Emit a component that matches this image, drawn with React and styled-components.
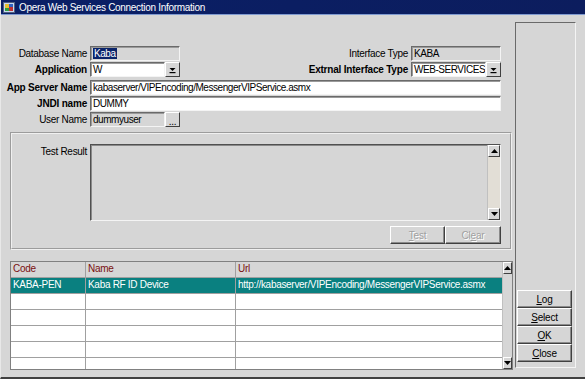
import styled, { createGlobalStyle } from "styled-components";

const GlobalStyle = createGlobalStyle`
  body {
    margin: 0;
    font-family: "Liberation Sans", Arial, sans-serif;
    font-size: 10px;
    letter-spacing: -0.3px;
  }
`;

const rows = [
  { code: "KABA-PEN", name: "Kaba RF ID Device", url: "http://kabaserver/VIPEncoding/MessengerVIPService.asmx" },
  { code: "", name: "", url: "" },
  { code: "", name: "", url: "" },
  { code: "", name: "", url: "" },
  { code: "", name: "", url: "" },
  { code: "", name: "", url: "" },
];

function DropArrow() {
  return (
    <svg width="7" height="8" viewBox="0 0 7 8">
      <path d="M0.5 2 H6.5 L3.5 5 Z" fill="#000" />
      <rect x="0.5" y="6" width="6" height="1.2" fill="#000" />
    </svg>
  );
}

function Tri({ down }) {
  return (
    <svg width="7" height="4" viewBox="0 0 7 4">
      <path d={down ? "M0 0 H7 L3.5 4 Z" : "M0 4 H7 L3.5 0 Z"} fill="#000" />
    </svg>
  );
}

function AppIcon() {
  return (
    <svg width="13" height="13" viewBox="0 0 13 13">
      <rect x="0.5" y="1.5" width="11" height="10" fill="#c8d8f0" stroke="#506080" />
      <rect x="2" y="3" width="4" height="4" fill="#e8c030" />
      <rect x="6" y="6" width="4" height="4" fill="#c03030" />
      <rect x="2" y="7" width="4" height="3" fill="#30a040" />
      <rect x="6" y="3" width="4" height="3" fill="#3060c0" />
    </svg>
  );
}

export default function App() {
  return (
    <>
      <GlobalStyle />
      <Window>
        <TitleBar>
          <AppIcon />
          <TitleText>Opera Web Services Connection Information</TitleText>
        </TitleBar>
        <Body>
          <LeftColumn>
            <Form>
              <FieldRow>
                <Label>Database Name</Label>
                <Field $width={90} $readonly>
                  <Selected>Kaba</Selected>
                </Field>
                <SideLabel>Interface Type</SideLabel>
                <Field $width={90} $readonly>KABA</Field>
              </FieldRow>
              <FieldRow>
                <Label $bold>Application</Label>
                <Field $width={75}>W</Field>
                <SmallButton><DropArrow /></SmallButton>
                <SideLabel $bold>Extrnal Interface Type</SideLabel>
                <Field $width={75}>WEB-SERVICES</Field>
                <SmallButton><DropArrow /></SmallButton>
              </FieldRow>
              <FieldRow $gap={2}>
                <Label $bold>App Server Name</Label>
                <Field $width={411}>kabaserver/VIPEncoding/MessengerVIPService.asmx</Field>
              </FieldRow>
              <FieldRow>
                <Label $bold>JNDI name</Label>
                <Field $width={411}>DUMMY</Field>
              </FieldRow>
              <FieldRow>
                <Label>User Name</Label>
                <Field $width={75} $readonly>dummyuser</Field>
                <SmallButton $dots>...</SmallButton>
              </FieldRow>
            </Form>

            <TestPanel>
              <TestRow>
                <TestLabel>Test Result</TestLabel>
                <ResultBox>
                  <ResultText />
                  <VScroll $light>
                    <ScrollBtn><Tri /></ScrollBtn>
                    <ScrollTrack />
                    <ScrollBtn><Tri down /></ScrollBtn>
                  </VScroll>
                </ResultBox>
              </TestRow>
              <ButtonRow>
                <PushButton $width={55} disabled>
                  <u>T</u>est
                </PushButton>
                <PushButton $width={56} disabled>
                  Cl<u>e</u>ar
                </PushButton>
              </ButtonRow>
            </TestPanel>

            <Grid>
              <Table>
                <HeaderRow>
                  <HeadCell $width={75}>Code</HeadCell>
                  <HeadCell $width={150}>Name</HeadCell>
                  <HeadCell $width={266}>Url</HeadCell>
                </HeaderRow>
                {rows.map((r, i) => (
                  <DataRow key={i} $selected={i === 0}>
                    <Cell $width={75}>{r.code}</Cell>
                    <Cell $width={150}>{r.name}</Cell>
                    <Cell $width={266}>{r.url}</Cell>
                  </DataRow>
                ))}
              </Table>
              <VScroll>
                <ScrollBtn><Tri /></ScrollBtn>
                <ScrollTrack />
                <ScrollBtn><Tri down /></ScrollBtn>
              </VScroll>
            </Grid>
          </LeftColumn>

          <RightPanel>
            <PushButton $width={55}><u>L</u>og</PushButton>
            <PushButton $width={55}><u>S</u>elect</PushButton>
            <PushButton $width={55}><u>O</u>K</PushButton>
            <PushButton $width={55}><u>C</u>lose</PushButton>
          </RightPanel>
        </Body>
      </Window>
    </>
  );
}

const Window = styled.div`
  width: 585px;
  height: 379px;
  box-sizing: border-box;
  background: #d6d6d6;
  border-left: 1px solid #e8e8e8;
  border-bottom: 2px solid #404040;
  display: flex;
  flex-direction: column;
  overflow: hidden;
  color: #000;
`;

const TitleBar = styled.div`
  height: 15px;
  flex-shrink: 0;
  display: flex;
  align-items: center;
  padding-left: 2px;
  background: linear-gradient(to right, #0a1f66, #0c1d5e);
  border-bottom: 1px solid #7f9ad0;
  box-sizing: border-box;
`;

const TitleText = styled.span`
  color: #fff;
  font-size: 10px;
  margin-left: 3px;
  letter-spacing: -0.3px;
`;

const Body = styled.div`
  flex: 1;
  display: flex;
`;

const LeftColumn = styled.div`
  width: 514px;
  display: flex;
  flex-direction: column;
  padding-top: 31px;
`;

const Form = styled.div`
  display: flex;
  flex-direction: column;
  gap: 1px;
  width: 500px;
`;

const FieldRow = styled.div`
  display: flex;
  align-items: center;
  height: 15px;
  margin-top: ${(p) => (p.$gap ? p.$gap : 0)}px;
`;

const Label = styled.div`
  width: 86px;
  margin-right: 3px;
  text-align: right;
  font-weight: ${(p) => (p.$bold ? "bold" : "normal")};
  letter-spacing: ${(p) => (p.$bold ? "-0.2px" : "-0.3px")};
  white-space: nowrap;
`;

const SideLabel = styled(Label)`
  flex: 1;
  width: auto;
`;

const Field = styled.div`
  width: ${(p) => p.$width}px;
  height: 15px;
  box-sizing: border-box;
  background: ${(p) => (p.$readonly ? "#d6d6d6" : "#fff")};
  border: 1px solid;
  border-color: #6a6a6a #f4f4f4 #f4f4f4 #6a6a6a;
  box-shadow: inset 1px 1px 0 #9a9a9a;
  padding: 0 1px 0 2px;
  line-height: 13px;
  letter-spacing: -0.45px;
  white-space: nowrap;
  overflow: hidden;
`;

const Selected = styled.span`
  background: #0a246a;
  color: #fff;
  padding: 0 1px;
`;

const SmallButton = styled.div`
  width: 15px;
  height: 15px;
  box-sizing: border-box;
  background: #d6d6d6;
  border: 1px solid;
  border-color: #fff #404040 #404040 #fff;
  display: flex;
  align-items: ${(p) => (p.$dots ? "flex-end" : "center")};
  justify-content: center;
  font-size: 10px;
  line-height: 9px;
`;

const TestPanel = styled.div`
  margin: 5px 0 0 9px;
  width: 502px;
  height: 118px;
  box-sizing: border-box;
  border: 2px groove #f0f0f0;
  padding-top: 10px;
  display: flex;
  flex-direction: column;
`;

const TestRow = styled.div`
  display: flex;
`;

const TestLabel = styled.div`
  width: 75px;
  margin-right: 3px;
  text-align: right;
  padding-top: 2px;
`;

const ResultBox = styled.div`
  width: 411px;
  height: 77px;
  box-sizing: border-box;
  border: 1px solid;
  border-color: #505050 #f4f4f4 #f4f4f4 #505050;
  box-shadow: inset 1px 1px 0 #8a8a8a;
  display: flex;
`;

const ResultText = styled.div`
  flex: 1;
`;

const VScroll = styled.div`
  width: 12px;
  display: flex;
  flex-direction: column;
  background: ${(p) => (p.$light ? "#e2ded6" : "#d6d6d6")};
  border-left: 1px solid #c0c0c0;
`;

const ScrollBtn = styled.div`
  height: 12px;
  box-sizing: border-box;
  background: #d6d6d6;
  border: 1px solid;
  border-color: #fff #404040 #404040 #fff;
  display: flex;
  align-items: center;
  justify-content: center;
`;

const ScrollTrack = styled.div`
  flex: 1;
`;

const ButtonRow = styled.div`
  display: flex;
  justify-content: flex-end;
  padding-right: 9px;
  margin-top: 5px;
`;

const PushButton = styled.button`
  width: ${(p) => p.$width}px;
  height: 18px;
  box-sizing: border-box;
  padding: 0;
  background: #d6d6d6;
  border: 1px solid;
  border-color: #fff #404040 #404040 #fff;
  box-shadow: inset -1px -1px 0 #8a8a8a;
  font-family: "Liberation Sans", Arial, sans-serif;
  font-size: 10px;
  letter-spacing: -0.2px;
  color: #000;
  &:disabled {
    color: #a0a0a0;
    text-shadow: 1px 1px 0 #fff;
  }
`;

const Grid = styled.div`
  margin: 11px 0 0 9px;
  width: 503px;
  height: 109px;
  box-sizing: border-box;
  border: 1px solid #808080;
  display: flex;
  overflow: hidden;
`;

const Table = styled.div`
  flex: 1;
  display: flex;
  flex-direction: column;
`;

const HeaderRow = styled.div`
  display: flex;
  height: 15px;
  flex-shrink: 0;
  background: #d6d6d6;
  border-bottom: 1px solid #a0a0a0;
`;

const HeadCell = styled.div`
  width: ${(p) => p.$width}px;
  box-sizing: border-box;
  border-right: 1px solid #a0a0a0;
  padding-left: 2px;
  color: #7a1010;
  line-height: 14px;
  &:last-child {
    border-right: none;
  }
`;

const DataRow = styled.div`
  display: flex;
  height: 16px;
  flex-shrink: 0;
  box-sizing: border-box;
  background: ${(p) => (p.$selected ? "#0a8080" : "#fff")};
  color: ${(p) => (p.$selected ? "#fff" : "#000")};
  border-bottom: 1px solid #a0a0a0;
`;

const Cell = styled.div`
  width: ${(p) => p.$width}px;
  box-sizing: border-box;
  border-right: 1px solid #a0a0a0;
  padding-left: 2px;
  line-height: 14px;
  white-space: nowrap;
  overflow: hidden;
  &:last-child {
    border-right: none;
  }
`;

const RightPanel = styled.div`
  margin-top: 7px;
  width: 61px;
  height: 346px;
  box-sizing: border-box;
  border: 1px solid;
  border-color: #6a6a6a #f4f4f4 #f4f4f4 #6a6a6a;
  display: flex;
  flex-direction: column;
  justify-content: flex-end;
  padding: 0 0 5px 1px;
`;
